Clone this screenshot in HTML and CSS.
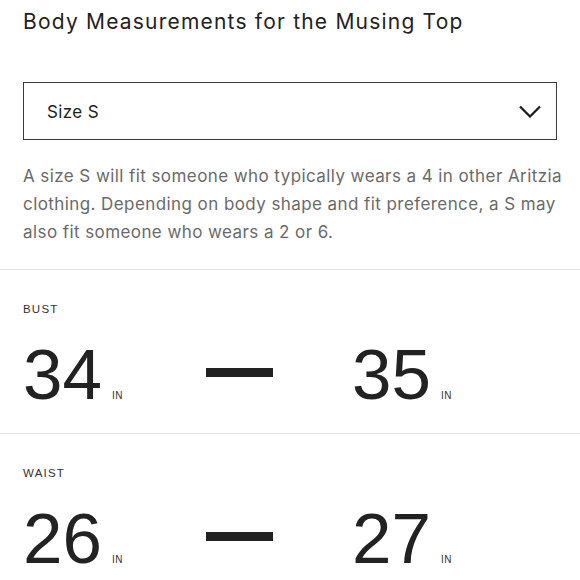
FILE: index.html
```html
<!DOCTYPE html>
<html lang="en">
<head>
<meta charset="utf-8">
<title>Body Measurements</title>
<link rel="stylesheet" href="styles.css">
</head>
<body>
<div class="intro">
  <h1 class="title">Body Measurements for the Musing Top</h1>
  <div class="select">
    <span class="select-value">Size S</span>
    <svg class="chevron" width="22" height="13" viewBox="0 0 22 13" aria-hidden="true">
      <polyline points="1,1.5 11,11.5 21,1.5" fill="none" stroke="#1a1a1a" stroke-width="2.2"/>
    </svg>
  </div>
  <p class="desc">A size S will fit someone who typically wears a 4 in other Aritzia clothing. Depending on body shape and fit preference, a S may also fit someone who wears a 2 or 6.</p>
</div>
<section class="measure">
  <div class="label">BUST</div>
  <div class="row">
    <div class="value"><span class="num">34</span><span class="unit">IN</span></div>
    <div class="dash"></div>
    <div class="value"><span class="num">35</span><span class="unit">IN</span></div>
  </div>
</section>
<section class="measure">
  <div class="label">WAIST</div>
  <div class="row">
    <div class="value"><span class="num">26</span><span class="unit">IN</span></div>
    <div class="dash"></div>
    <div class="value"><span class="num">27</span><span class="unit">IN</span></div>
  </div>
</section>
</body>
</html>
```
FILE: styles.css
```css
html, body {
  margin: 0;
  padding: 0;
  background: #ffffff;
}
body {
  font-family: Inter, "Liberation Sans", sans-serif;
  color: #222222;
  width: 580px;
  overflow: hidden;
}
.intro {
  padding: 8px 0 0 23px;
}
.title {
  margin: 0;
  font-size: 21px;
  line-height: 28px;
  font-weight: 400;
  letter-spacing: 1.2px;
  color: #222222;
}
.select {
  margin-top: 46px;
  margin-right: 23px;
  height: 58px;
  box-sizing: border-box;
  border: 1px solid #3a3a3a;
  display: flex;
  align-items: center;
  justify-content: space-between;
  padding: 2px 15px 0 23px;
}
.select-value {
  font-size: 17px;
  letter-spacing: 0.4px;
  color: #222222;
}
.chevron {
  display: block;
  margin-top: -2px;
}
.desc {
  margin: 22px 5px 23px 0;
  font-size: 17px;
  line-height: 28px;
  letter-spacing: 0.42px;
  color: #6a6a6a;
}
.measure {
  border-top: 1px solid #e6e6e6;
  padding: 32px 22px 23px 23px;
}
.label {
  font-family: "Liberation Sans", Arial, sans-serif;
  font-size: 11.5px;
  line-height: 14px;
  letter-spacing: 1.2px;
  color: #333333;
  margin-bottom: 23px;
}
.row {
  display: grid;
  grid-template-columns: 183px 146px auto;
  align-items: center;
}
.value {
  display: flex;
  align-items: baseline;
  gap: 10px;
}
.num {
  font-family: "Liberation Sans", Arial, sans-serif;
  font-size: 71px;
  line-height: 71px;
  color: #222222;
}
.unit {
  font-family: "Liberation Sans", Arial, sans-serif;
  font-size: 10px;
  letter-spacing: 0.6px;
  color: #333333;
}
.dash {
  width: 67px;
  height: 9px;
  background: #222222;
  margin-bottom: 5px;
}
```
